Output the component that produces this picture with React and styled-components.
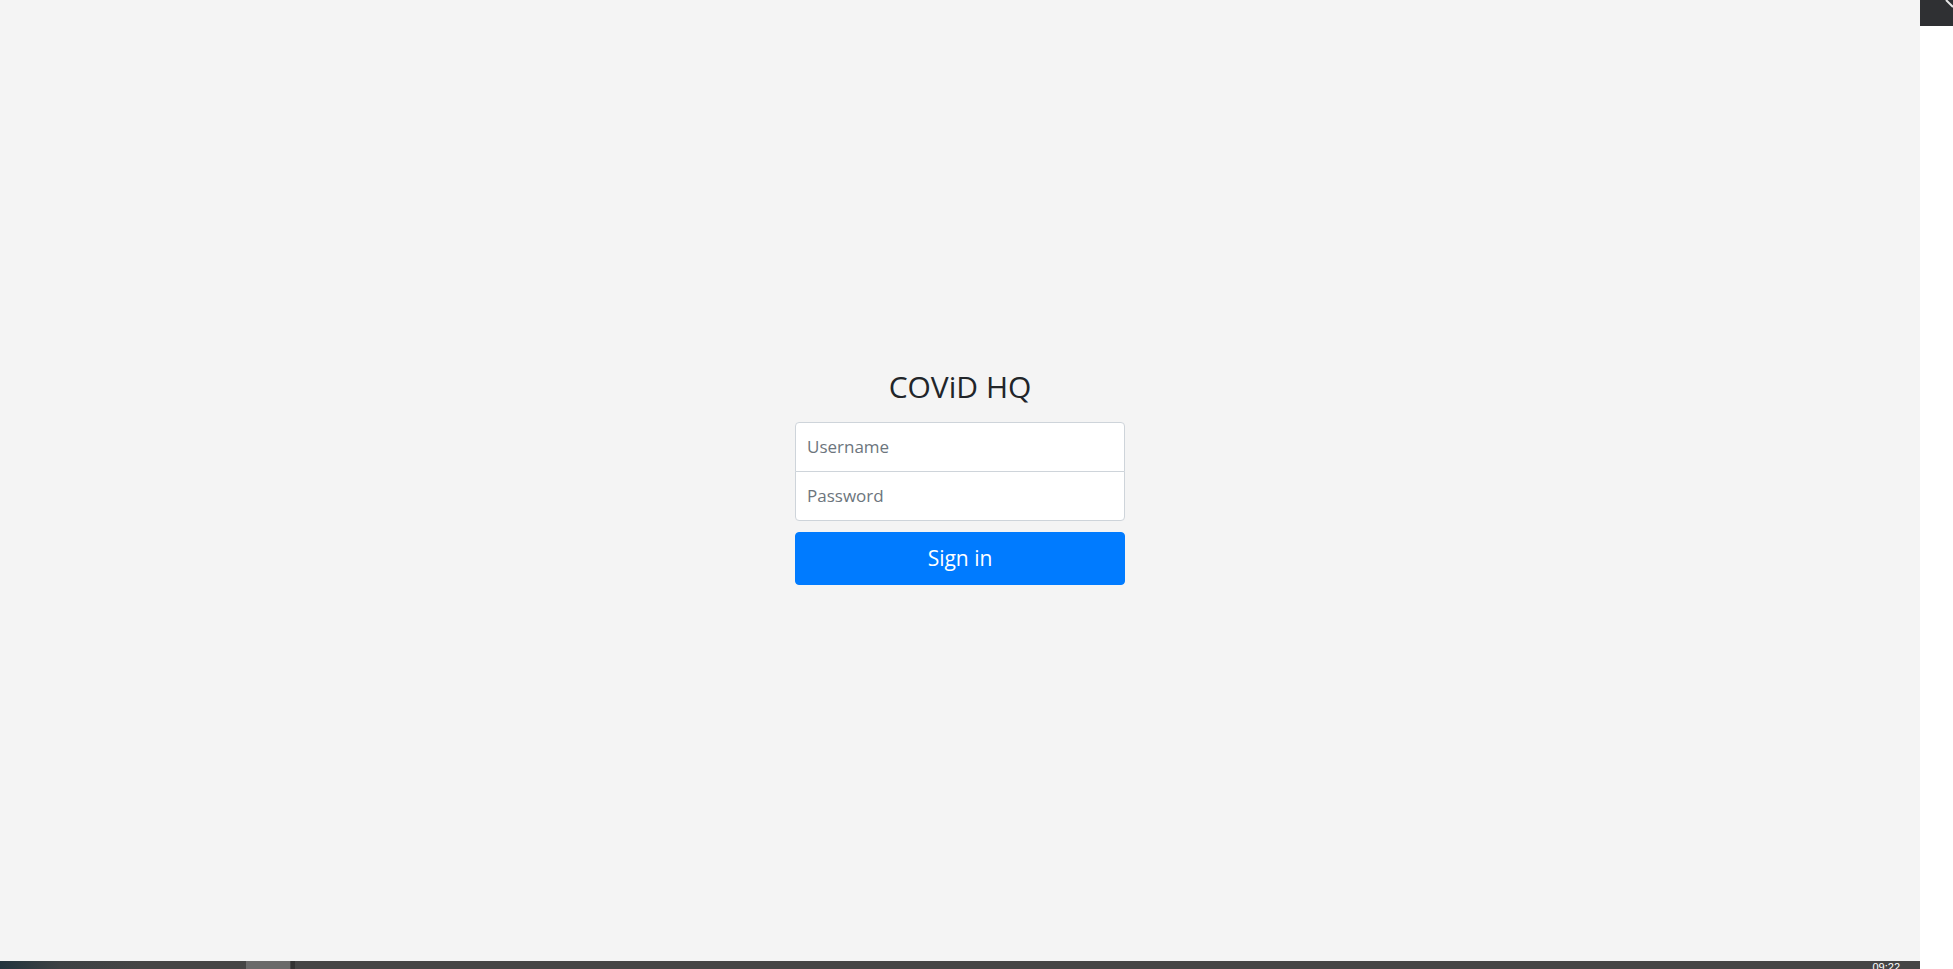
import React from "react";
import styled, { createGlobalStyle } from "styled-components";

const GlobalStyle = createGlobalStyle`
  html, body {
    margin: 0;
    padding: 0;
    height: 100%;
    overflow: hidden;
  }
  body {
    font-family: "Open Sans", "Noto Sans", sans-serif;
  }
  #root {
    height: 100%;
  }
`;

const App = () => {
  return (
    <>
      <GlobalStyle />
      <Screen>
        <Top>
          <Page>
            <SignInForm onSubmit={(e) => e.preventDefault()}>
              <Title>COViD HQ</Title>
              <InputGroup>
                <Field type="text" placeholder="Username" position="top" />
                <Field type="password" placeholder="Password" position="bottom" />
              </InputGroup>
              <SubmitButton type="submit">Sign in</SubmitButton>
            </SignInForm>
          </Page>
          <SideStrip>
            <CornerTile>
              <svg width="33" height="26" viewBox="0 0 33 26">
                <path d="M26 0 L33 7" stroke="#e6e6e6" strokeWidth="2" />
              </svg>
            </CornerTile>
          </SideStrip>
        </Top>
        <Taskbar>
          <TaskButton />
          <TaskDivider />
          <Clock>09:22</Clock>
        </Taskbar>
      </Screen>
    </>
  );
};

export default App;

const Screen = styled.div`
  display: flex;
  flex-direction: column;
  height: 969px;
  width: 1953px;
`;

const Top = styled.div`
  display: flex;
  flex: 1;
  min-height: 0;
`;

const Page = styled.div`
  flex: 1;
  background: #f4f4f4;
  display: flex;
  align-items: center;
  justify-content: center;
`;

const SideStrip = styled.div`
  width: 33px;
  background: #ffffff;
`;

const CornerTile = styled.div`
  height: 26px;
  background: #2f3033;
  svg {
    display: block;
  }
`;

const SignInForm = styled.form`
  width: 330px;
  display: flex;
  flex-direction: column;
  margin-top: -8px;
`;

const Title = styled.h1`
  margin: 0 0 17px;
  font-size: 30px;
  font-weight: 400;
  line-height: 1.2;
  text-align: center;
  color: #212529;
`;

const InputGroup = styled.div`
  display: flex;
  flex-direction: column;
`;

const Field = styled.input`
  box-sizing: border-box;
  height: 50px;
  padding: 11px 11px;
  font-family: "Open Sans", "Noto Sans", sans-serif;
  font-size: 17px;
  color: #495057;
  background: #fff;
  border: 1px solid #ced4da;
  outline: none;
  margin-bottom: ${({ position }) => (position === "top" ? "-1px" : "0")};
  border-radius: ${({ position }) =>
    position === "top" ? "4px 4px 0 0" : "0 0 4px 4px"};

  &::placeholder {
    color: #6c757d;
  }
`;

const SubmitButton = styled.button`
  margin-top: 11px;
  height: 53px;
  border: 1px solid #007bff;
  border-radius: 4px;
  background: #007bff;
  color: #fff;
  font-family: "Open Sans", "Noto Sans", sans-serif;
  font-size: 21px;
  cursor: pointer;
`;

const Taskbar = styled.div`
  height: 8px;
  width: 1920px;
  display: flex;
  align-items: flex-start;
  overflow: hidden;
  background: linear-gradient(90deg, #23343e 0%, #3d4144 60px, #454545 140px, #454545 100%);
`;

const TaskButton = styled.div`
  margin-left: 246px;
  width: 44px;
  height: 8px;
  background: #6a6a6a;
`;

const TaskDivider = styled.div`
  width: 4px;
  height: 8px;
  margin-left: 1px;
  background: #333;
`;

const Clock = styled.div`
  margin-left: auto;
  margin-right: 20px;
  margin-top: 1px;
  font-family: "Liberation Sans", sans-serif;
  font-size: 11px;
  line-height: 11px;
  color: #fff;
`;
